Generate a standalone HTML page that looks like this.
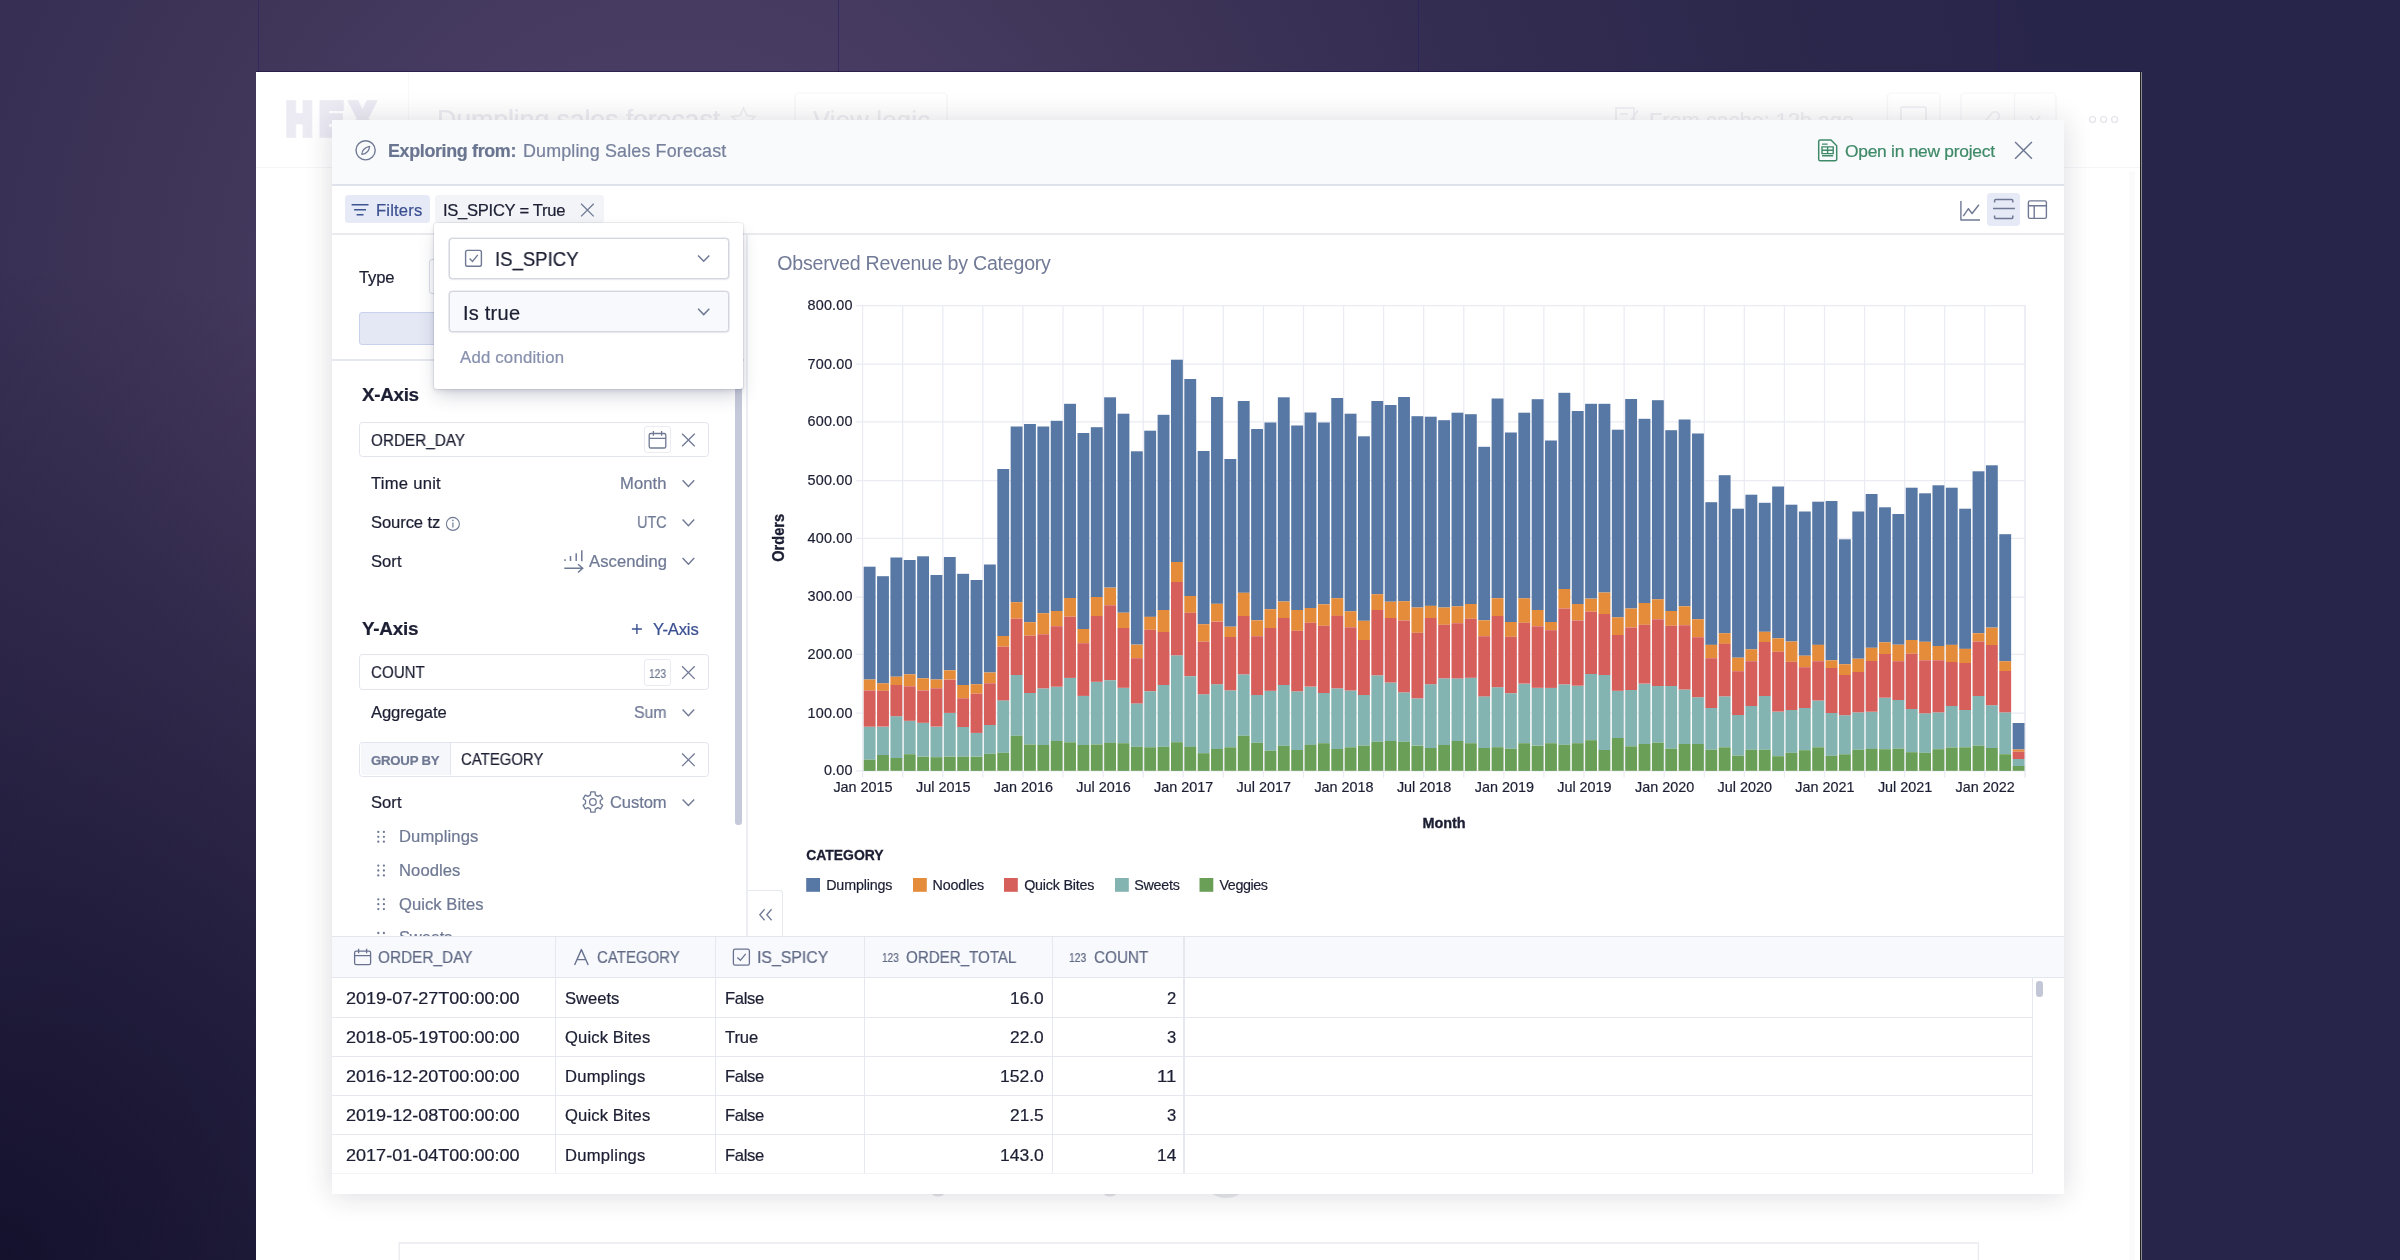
<!DOCTYPE html>
<html lang="en">
<head>
<meta charset="utf-8">
<title>Exploring from: Dumpling Sales Forecast</title>
<style>
*{box-sizing:border-box;margin:0;padding:0}
html,body{width:2400px;height:1260px;overflow:hidden}
body{position:relative;font-family:"Liberation Sans",Arial,sans-serif;color:#1c1f33;background:#28254a}
.a{position:absolute}
.bg{left:0;top:0;width:2400px;height:1260px;
 background:
  radial-gradient(circle 1000px at 0px 1260px, rgba(9,6,30,.66) 0%, rgba(9,6,30,.36) 40%, rgba(9,6,30,0) 100%),
  radial-gradient(circle 1450px at 680px 310px, #4c4066 0%, #483c62 18%, #3f3559 35%, #342d52 56%, #2c284c 76%, #28254a 100%)}
.vl{top:0;width:1px;height:1260px;background:rgba(36,28,100,.5)}
.app{left:256px;top:72px;width:1884px;height:1188px;background:#fff}
.appedge{left:2140px;top:72px;width:1px;height:1188px;background:#222224}
.appedge2{left:2141px;top:72px;width:1px;height:1188px;background:#8b8b8d}
.apptop{left:256px;top:71px;width:1885px;height:1px;background:rgba(20,14,60,.55)}
.t{position:absolute;white-space:pre;line-height:1;will-change:transform;-webkit-text-stroke:.22px currentColor}
svg{position:absolute;overflow:visible;will-change:transform}
.ov{left:0;top:0}
.gh{color:#ececf1}
.modal{left:332px;top:120px;width:1732px;height:1074px;background:#fff;
 box-shadow:0 1px 27px rgba(30,30,55,.165)}
.mh{left:332px;top:120px;width:1732px;height:64px;background:#f9fafc}
.mhb{left:332px;top:184px;width:1732px;height:2px;background:#dfe2eb}
.fb{left:332px;top:233px;width:1732px;height:2px;background:linear-gradient(#ecedf2,#e6e8ee)}
.btnf{left:344.8px;top:195px;width:85.2px;height:28.2px;background:#e6eaf6;border-radius:3.5px}
.chip{left:434.8px;top:195px;width:169.2px;height:28.2px;background:#f3f4f8;border-radius:3.5px}
.sel{left:1987px;top:192.8px;width:33.4px;height:33.4px;background:#e6eaf6;border-radius:3.5px}
.box{border:1.2px solid #e3e5ee;border-radius:3.5px;background:#fff}
.ibox{border:1.2px solid #eaecf2;border-radius:3px;background:#fff}
.pop{left:434.3px;top:223.3px;width:309px;height:165.3px;background:#fff;border-radius:3px;
 box-shadow:0 0 0 1px rgba(40,46,90,.07),0 2px 5px rgba(30,34,70,.12),0 9px 18px -3px rgba(30,34,70,.20)}
.psel{left:448.8px;width:280px;height:40.8px;border:1px solid #d4d6df;border-radius:3.5px;box-shadow:0 0 0 .6px #dddfe6,0 1px 2px rgba(40,44,80,.07)}
.th{left:332px;top:936.4px;width:1732px;height:41.2px;background:#f8f9fc;border-top:1.3px solid #e4e6ee;border-bottom:1.3px solid #e4e6ee}
.hl{left:332px;width:1700.5px;height:1px;background:#e7e8ef}
.vc{top:937px;width:1.3px;height:236px;background:#e6e8ef}
</style>
</head>
<body>
<div class="a bg"></div>
<div class="a vl" style="left:258px"></div>
<div class="a vl" style="left:838px"></div>
<div class="a vl" style="left:1418px"></div>
<div class="a vl" style="left:1998px"></div>

<div class="a app"></div>
<div class="a appedge"></div>
<div class="a appedge2"></div>
<div class="a apptop"></div>
<div class="a" style="left:256px;top:167px;width:1884px;height:1px;background:#f5f5f8"></div>
<div class="a" style="left:408px;top:72px;width:1px;height:95px;background:#f8f8fa"></div>
<div class="t" style="left:286.2px;top:96.4px;font-size:46px;font-weight:bold;letter-spacing:8.2px;color:#eceaf3;-webkit-text-stroke:5.5px #eceaf3;transform:scaleX(.8);transform-origin:0 0">HEX</div>
<div class="t gh" style="left:436.5px;top:107.4px;font-size:26.8px;letter-spacing:-0.13px">Dumpling sales forecast</div>
<svg class="ov" width="2400" height="1260" viewBox="0 0 2400 1260">
<path d="M743.5 108 L747 115.5 L755 116.5 L749 122 L750.5 130 L743.5 126 L736.5 130 L738 122 L732 116.5 L740 115.5 Z" fill="none" stroke="#efeff3" stroke-width="1.6"/>
<rect x="795" y="93" width="152" height="52" rx="4" fill="none" stroke="#f5f5f8" stroke-width="1.2"/>
<rect x="1887.5" y="93" width="52.5" height="52" rx="4" fill="none" stroke="#f6f6f8" stroke-width="1.2"/>
<rect x="1961" y="93" width="95" height="52" rx="4" fill="none" stroke="#f6f6f8" stroke-width="1.2"/>
<path d="M2014.5 93 V145" stroke="#f6f6f8" stroke-width="1.2"/>
<rect x="1901" y="107" width="25" height="22" rx="2" fill="none" stroke="#efeff3" stroke-width="1.6"/>
<path d="M1616 108 H1634 V126 H1616 Z M1620 114 H1628 M1630 122 L1638 110" fill="none" stroke="#efeff3" stroke-width="1.6"/>
<path d="M1982 125 L1992 113 A4 4 0 0 1 1998 119 L1990 128" fill="none" stroke="#f0f0f4" stroke-width="1.6"/>
<path d="M2030 116 L2035 122 L2040 116" fill="none" stroke="#f0f0f4" stroke-width="1.4"/>
<circle cx="2092.5" cy="119.5" r="3" fill="none" stroke="#e2e2e9" stroke-width="1.2"/>
<circle cx="2103.6" cy="119.5" r="3" fill="none" stroke="#e2e2e9" stroke-width="1.2"/>
<circle cx="2114.6" cy="119.5" r="3" fill="none" stroke="#e2e2e9" stroke-width="1.2"/>
<rect x="2129" y="171" width="6" height="1100" rx="3" fill="#fbfbfc"/>
<path d="M399.2 1262 V1243 H1978.4 V1262" fill="none" stroke="#e9e9ef" stroke-width="1.3"/>
<ellipse cx="938" cy="1192" rx="7" ry="4.5" fill="#e3e3e9"/>
<ellipse cx="1110" cy="1192" rx="7" ry="4.5" fill="#e3e3e9"/>
<ellipse cx="1226" cy="1190" rx="15" ry="8" fill="#e9e9ee"/>
</svg>
<div class="t gh" style="left:812.5px;top:107.5px;font-size:25.6px;letter-spacing:0.25px;color:#eeeef2">View logic</div>
<div class="t gh" style="left:1648.5px;top:110px;font-size:22px;letter-spacing:-0.15px;color:#efeff3">From cache: 12h ago</div>


<div class="a modal"></div>
<div class="a mh"></div>
<div class="a mhb"></div>
<div class="a fb"></div>
<div class="a btnf"></div>
<div class="a chip"></div>
<div class="a sel"></div>

<!-- left panel -->
<div class="a" style="left:429.2px;top:259px;width:200px;height:35px;border:1.2px solid #d9dce6;border-radius:3px;background:#fff"></div>
<div class="a" style="left:359.2px;top:312.4px;width:250px;height:32.6px;border:1.2px solid #c9d1ec;border-radius:3px;background:#e4e8f5"></div>
<div class="a" style="left:332px;top:359.4px;width:412px;height:1.4px;background:#e6e8f0"></div>
<div class="a box" style="left:359.3px;top:421.9px;width:349.6px;height:35.3px"></div>
<div class="a ibox" style="left:643.8px;top:426px;width:27px;height:27.2px"></div>
<div class="a box" style="left:359.3px;top:654.4px;width:349.6px;height:35.3px"></div>
<div class="a ibox" style="left:643.8px;top:658.6px;width:27px;height:27.2px"></div>
<div class="a box" style="left:359.3px;top:741.6px;width:349.6px;height:35px"></div>
<div class="a" style="left:360.5px;top:742.8px;width:90px;height:32.6px;background:#f6f7fa;border-right:1.2px solid #e3e5ee;border-radius:2.5px 0 0 2.5px"></div>
<div class="a" style="left:735.4px;top:380px;width:6.2px;height:445px;background:#c6c9d9;border-radius:3px"></div>
<div class="a" style="left:746.2px;top:235px;width:2.2px;height:702px;background:#eceef4"></div>
<div class="a" style="left:748.4px;top:890px;width:35px;height:47px;border:1.2px solid #e6e8ef;border-left:none;border-bottom:none;border-radius:0 3px 0 0;background:#fff"></div>

<svg class="ov" width="2400" height="1260" viewBox="0 0 2400 1260">
<circle cx="365.6" cy="150.3" r="9.6" stroke="#6f7994" stroke-width="1.4" fill="none"/>
<path d="M361.8 154.3 Q362.2 148.2 369.6 146.4 Q369 153.6 361.8 154.3 Z" stroke="#6f7994" stroke-width="1.2" fill="none" stroke-linejoin="round"/>
<path d="M1820.3 140 H1831 L1836.7 145.7 V159.2 A1.6 1.6 0 0 1 1835.1 160.8 H1820.3 A1.6 1.6 0 0 1 1818.7 159.2 V141.6 A1.6 1.6 0 0 1 1820.3 140 Z" stroke="#3f8a68" stroke-width="1.5" fill="none" stroke-linejoin="round"/>
<path d="M1822 144.1 H1827.6 M1822 146.9 H1833.2 V153.6 H1822 Z M1822 150.2 H1833.2 M1827.6 146.9 V153.6 M1822 155.8 H1833.2" stroke="#3f8a68" stroke-width="1.4" fill="none"/>
<path d="M2015.1 142.0 L2031.9 158.8 M2031.9 142.0 L2015.1 158.8" stroke="#6f7994" stroke-width="1.5" fill="none"/>
<path d="M351.6 204.8 H368.5 M354.1 209.8 H366 M356.6 214.8 H363.5" stroke="#3e5492" stroke-width="1.5" fill="none"/>
<path d="M581.1 203.8 L593.7 216.4 M593.7 203.8 L581.1 216.4" stroke="#6f7994" stroke-width="1.3" fill="none"/>
<path d="M1960.9 201.1 V220 H1980 M1963.3 216.1 L1968.4 208.7 L1972.1 213.5 L1978.9 204.8" stroke="#6f7994" stroke-width="1.4" fill="none" stroke-linejoin="round"/>
<path d="M1994.6 202.6 V200.6 A1.2 1.2 0 0 1 1995.8 199.4 H2011.6 A1.2 1.2 0 0 1 2012.8 200.6 V202.6 M1993 208.5 H2014.9 M1994.6 215.4 V217.4 A1.2 1.2 0 0 0 1995.8 218.6 H2011.6 A1.2 1.2 0 0 0 2012.8 217.4 V215.4" stroke="#6f7994" stroke-width="1.5" fill="none"/>
<rect x="2028.4" y="200.9" width="18" height="17.5" rx="1.6" stroke="#6f7994" stroke-width="1.4" fill="none"/><path d="M2028.4 205.7 H2046.4 M2034.2 205.7 V218.4" stroke="#6f7994" stroke-width="1.4" fill="none"/>
<rect x="649.2" y="433.5" width="16.6" height="14.5" rx="1.6" stroke="#6f7994" stroke-width="1.3" fill="none"/><path d="M649.2 438.4 H665.8 M653.4 431.0 V435.8 M661.6 431.0 V435.8" stroke="#6f7994" stroke-width="1.3" fill="none"/>
<path d="M682.1 433.7 L694.7 446.3 M694.7 433.7 L682.1 446.3" stroke="#6f7994" stroke-width="1.3" fill="none"/>
<path d="M682.6 480.2 L688.4 486.4 L694.2 480.2" stroke="#6f7994" stroke-width="1.4" fill="none"/>
<path d="M682.6 519.5 L688.4 525.7 L694.2 519.5" stroke="#6f7994" stroke-width="1.4" fill="none"/>
<path d="M682.6 558.1 L688.4 564.3 L694.2 558.1" stroke="#6f7994" stroke-width="1.4" fill="none"/>
<circle cx="452.9" cy="523.9" r="6.5" stroke="#6f7994" stroke-width="1.1" fill="none"/><path d="M452.9 522.6 V527.6" stroke="#6f7994" stroke-width="1.2"/><circle cx="452.9" cy="520.4" r="0.8" fill="#6f7994"/>
<path d="M565 559.2 V561 M570.5 556 V561 M576.2 553.3 V561 M581.8 550.3 V561.2 M564.3 568.3 H582.5 M578 564.2 L582.7 568.3 L578 572.5" stroke="#6f7994" stroke-width="1.5" fill="none"/>
<path d="M631.9 629 H641.9 M636.9 624 V634" stroke="#3b5091" stroke-width="1.4"/>
<path d="M682.1 666.3 L694.7 678.9 M694.7 666.3 L682.1 678.9" stroke="#6f7994" stroke-width="1.3" fill="none"/>
<path d="M682.6 709.5 L688.4 715.7 L694.2 709.5" stroke="#6f7994" stroke-width="1.4" fill="none"/>
<path d="M682.1 753.5 L694.7 766.1 M694.7 753.5 L682.1 766.1" stroke="#6f7994" stroke-width="1.3" fill="none"/>
<path d="M595.34 794.91 L595.04 791.93 L590.76 791.93 L590.46 794.91 L587.98 796.34 L585.25 795.11 L583.10 798.82 L585.54 800.57 L585.54 803.43 L583.10 805.18 L585.25 808.89 L587.98 807.66 L590.46 809.09 L590.76 812.07 L595.04 812.07 L595.34 809.09 L597.82 807.66 L600.55 808.89 L602.70 805.18 L600.26 803.43 L600.26 800.57 L602.70 798.82 L600.55 795.11 L597.82 796.34 Z" stroke="#6f7994" stroke-width="1.3" fill="none" stroke-linejoin="round"/><circle cx="592.9" cy="802" r="3.3" stroke="#6f7994" stroke-width="1.3" fill="none"/>
<path d="M682.6 799.4 L688.4 805.6 L694.2 799.4" stroke="#6f7994" stroke-width="1.4" fill="none"/>
<circle cx="378.3" cy="831.9" r="1.15" fill="#6f7994"/><circle cx="378.3" cy="836.8" r="1.15" fill="#6f7994"/><circle cx="378.3" cy="841.7" r="1.15" fill="#6f7994"/><circle cx="383.9" cy="831.9" r="1.15" fill="#6f7994"/><circle cx="383.9" cy="836.8" r="1.15" fill="#6f7994"/><circle cx="383.9" cy="841.7" r="1.15" fill="#6f7994"/>
<circle cx="378.3" cy="865.6" r="1.15" fill="#6f7994"/><circle cx="378.3" cy="870.5" r="1.15" fill="#6f7994"/><circle cx="378.3" cy="875.4" r="1.15" fill="#6f7994"/><circle cx="383.9" cy="865.6" r="1.15" fill="#6f7994"/><circle cx="383.9" cy="870.5" r="1.15" fill="#6f7994"/><circle cx="383.9" cy="875.4" r="1.15" fill="#6f7994"/>
<circle cx="378.3" cy="899.3" r="1.15" fill="#6f7994"/><circle cx="378.3" cy="904.2" r="1.15" fill="#6f7994"/><circle cx="378.3" cy="909.1" r="1.15" fill="#6f7994"/><circle cx="383.9" cy="899.3" r="1.15" fill="#6f7994"/><circle cx="383.9" cy="904.2" r="1.15" fill="#6f7994"/><circle cx="383.9" cy="909.1" r="1.15" fill="#6f7994"/>
<circle cx="378.3" cy="933.0" r="1.15" fill="#6f7994"/><circle cx="378.3" cy="937.9" r="1.15" fill="#6f7994"/><circle cx="378.3" cy="942.8" r="1.15" fill="#6f7994"/><circle cx="383.9" cy="933.0" r="1.15" fill="#6f7994"/><circle cx="383.9" cy="937.9" r="1.15" fill="#6f7994"/><circle cx="383.9" cy="942.8" r="1.15" fill="#6f7994"/>
<path d="M764.6 909.3 L759.8 914.8 L764.6 920.3 M771.6 909.3 L766.8 914.8 L771.6 920.3" stroke="#6f7994" stroke-width="1.3" fill="none"/>
</svg>
<div class="t" style="left:388.3px;top:142.7px;font-size:17.9px;color:#6a7590;letter-spacing:-0.342px;font-weight:bold">Exploring from:</div>
<div class="t" style="left:522.5px;top:142.7px;font-size:17.9px;color:#77819d;letter-spacing:0.156px">Dumpling Sales Forecast</div>
<div class="t" style="left:1845.0px;top:143.2px;font-size:17.4px;color:#3f8a68;letter-spacing:-0.260px">Open in new project</div>
<div class="t" style="left:376.2px;top:202.6px;font-size:16.6px;color:#3b5091;letter-spacing:0.180px">Filters</div>
<div class="t" style="left:443.2px;top:202.6px;font-size:16.6px;color:#1c1f33;letter-spacing:-0.288px">IS_SPICY = True</div>
<div class="t" style="left:359.2px;top:269.6px;font-size:16.6px;color:#1c1f33;letter-spacing:-0.195px">Type</div>
<div class="t" style="left:361.7px;top:385.9px;font-size:18.9px;color:#1c1f33;letter-spacing:-0.339px;font-weight:bold">X-Axis</div>
<div class="t" style="left:370.5px;top:432.5px;font-size:16.6px;color:#1c1f33;transform:scaleX(0.9211);transform-origin:0 0">ORDER_DAY</div>
<div class="t" style="left:370.5px;top:476.1px;font-size:16.6px;color:#1c1f33;letter-spacing:0.259px">Time unit</div>
<div class="t" style="left:620.0px;top:476.1px;font-size:16.6px;color:#6f7994;letter-spacing:0.069px">Month</div>
<div class="t" style="left:370.5px;top:515.4px;font-size:16.6px;color:#1c1f33;letter-spacing:-0.101px">Source tz</div>
<div class="t" style="left:636.7px;top:515.4px;font-size:16.6px;color:#6f7994;transform:scaleX(0.8707);transform-origin:0 0">UTC</div>
<div class="t" style="left:370.5px;top:554.4px;font-size:16.6px;color:#1c1f33;letter-spacing:0.021px">Sort</div>
<div class="t" style="left:589.0px;top:554.4px;font-size:16.6px;color:#6f7994;letter-spacing:0.075px">Ascending</div>
<div class="t" style="left:361.7px;top:620.4px;font-size:18.9px;color:#1c1f33;letter-spacing:-0.273px;font-weight:bold">Y-Axis</div>
<div class="t" style="left:652.9px;top:622.3px;font-size:16.6px;color:#3b5091;letter-spacing:-0.144px">Y-Axis</div>
<div class="t" style="left:370.5px;top:664.9px;font-size:16.6px;color:#1c1f33;transform:scaleX(0.9119);transform-origin:0 0">COUNT</div>
<div class="t" style="left:648.9px;top:667.6px;font-size:12.3px;color:#6f7994;transform:scaleX(0.8280);transform-origin:0 0">123</div>
<div class="t" style="left:370.5px;top:705.4px;font-size:16.6px;color:#1c1f33;letter-spacing:-0.110px">Aggregate</div>
<div class="t" style="left:633.8px;top:705.4px;font-size:16.6px;color:#6f7994;transform:scaleX(0.9553);transform-origin:0 0">Sum</div>
<div class="t" style="left:370.5px;top:753.5px;font-size:13.2px;color:#6f7994;letter-spacing:-0.230px;font-weight:bold">GROUP BY</div>
<div class="t" style="left:461.4px;top:751.8px;font-size:16.6px;color:#1c1f33;transform:scaleX(0.8996);transform-origin:0 0">CATEGORY</div>
<div class="t" style="left:370.5px;top:795.4px;font-size:16.6px;color:#1c1f33;letter-spacing:0.021px">Sort</div>
<div class="t" style="left:609.8px;top:795.4px;font-size:16.6px;color:#6f7994;letter-spacing:-0.114px">Custom</div>
<div class="t" style="left:398.6px;top:829.2px;font-size:16.6px;color:#6f7994;letter-spacing:0.112px">Dumplings</div>
<div class="t" style="left:398.6px;top:863.0px;font-size:16.6px;color:#6f7994;letter-spacing:0.085px">Noodles</div>
<div class="t" style="left:398.6px;top:896.6px;font-size:16.6px;color:#6f7994;letter-spacing:0.058px">Quick Bites</div>
<div class="t" style="left:398.6px;top:930.3px;font-size:16.6px;color:#6f7994;letter-spacing:-0.204px">Sweets</div>

<svg class="chart" style="left:750px;top:234px" width="1314" height="702" viewBox="750 234 1314 702" font-family="'Liberation Sans', Arial, sans-serif">
<g stroke="#eaebf3" stroke-width="1.25" fill="none"><line x1="856" x2="2025.5" y1="770.8" y2="770.8"/><line x1="856" x2="2025.5" y1="713.2" y2="713.2"/><line x1="856" x2="2025.5" y1="654.3" y2="654.3"/><line x1="856" x2="2025.5" y1="597.0" y2="597.0"/><line x1="856" x2="2025.5" y1="538.3" y2="538.3"/><line x1="856" x2="2025.5" y1="480.5" y2="480.5"/><line x1="856" x2="2025.5" y1="421.8" y2="421.8"/><line x1="856" x2="2025.5" y1="364.2" y2="364.2"/><line x1="856" x2="2025.5" y1="305.5" y2="305.5"/><line x1="862.6" x2="862.6" y1="305.5" y2="777.5"/><line x1="902.7" x2="902.7" y1="305.5" y2="777.5"/><line x1="942.8" x2="942.8" y1="305.5" y2="777.5"/><line x1="982.8" x2="982.8" y1="305.5" y2="777.5"/><line x1="1022.9" x2="1022.9" y1="305.5" y2="777.5"/><line x1="1063.0" x2="1063.0" y1="305.5" y2="777.5"/><line x1="1103.1" x2="1103.1" y1="305.5" y2="777.5"/><line x1="1143.2" x2="1143.2" y1="305.5" y2="777.5"/><line x1="1183.2" x2="1183.2" y1="305.5" y2="777.5"/><line x1="1223.3" x2="1223.3" y1="305.5" y2="777.5"/><line x1="1263.4" x2="1263.4" y1="305.5" y2="777.5"/><line x1="1303.5" x2="1303.5" y1="305.5" y2="777.5"/><line x1="1343.6" x2="1343.6" y1="305.5" y2="777.5"/><line x1="1383.6" x2="1383.6" y1="305.5" y2="777.5"/><line x1="1423.7" x2="1423.7" y1="305.5" y2="777.5"/><line x1="1463.8" x2="1463.8" y1="305.5" y2="777.5"/><line x1="1503.9" x2="1503.9" y1="305.5" y2="777.5"/><line x1="1543.9" x2="1543.9" y1="305.5" y2="777.5"/><line x1="1584.0" x2="1584.0" y1="305.5" y2="777.5"/><line x1="1624.1" x2="1624.1" y1="305.5" y2="777.5"/><line x1="1664.2" x2="1664.2" y1="305.5" y2="777.5"/><line x1="1704.3" x2="1704.3" y1="305.5" y2="777.5"/><line x1="1744.3" x2="1744.3" y1="305.5" y2="777.5"/><line x1="1784.4" x2="1784.4" y1="305.5" y2="777.5"/><line x1="1824.5" x2="1824.5" y1="305.5" y2="777.5"/><line x1="1864.6" x2="1864.6" y1="305.5" y2="777.5"/><line x1="1904.7" x2="1904.7" y1="305.5" y2="777.5"/><line x1="1944.7" x2="1944.7" y1="305.5" y2="777.5"/><line x1="1984.8" x2="1984.8" y1="305.5" y2="777.5"/><line x1="2024.9" x2="2024.9" y1="305.5" y2="777.5"/><line x1="2025.3" x2="2025.3" y1="305.5" y2="777.5"/></g>
<g fill="#5778a4"><rect x="863.70" y="566.7" width="11.86" height="112.8"/><rect x="877.06" y="576.2" width="11.86" height="107.2"/><rect x="890.42" y="557.5" width="11.86" height="119.2"/><rect x="903.78" y="560.0" width="11.86" height="114.3"/><rect x="917.14" y="556.3" width="11.86" height="122.0"/><rect x="930.50" y="575.0" width="11.86" height="104.5"/><rect x="943.86" y="557.0" width="11.86" height="113.3"/><rect x="957.22" y="573.8" width="11.86" height="111.2"/><rect x="970.58" y="580.0" width="11.86" height="104.2"/><rect x="983.94" y="564.5" width="11.86" height="108.0"/><rect x="997.30" y="469.0" width="11.86" height="167.0"/><rect x="1010.66" y="426.5" width="11.86" height="175.7"/><rect x="1024.02" y="424.0" width="11.86" height="198.2"/><rect x="1037.38" y="426.5" width="11.86" height="186.7"/><rect x="1050.74" y="420.8" width="11.86" height="190.2"/><rect x="1064.10" y="403.8" width="11.86" height="194.2"/><rect x="1077.46" y="433.0" width="11.86" height="196.0"/><rect x="1090.82" y="427.2" width="11.86" height="169.8"/><rect x="1104.18" y="397.3" width="11.86" height="190.3"/><rect x="1117.54" y="413.7" width="11.86" height="199.0"/><rect x="1130.90" y="451.3" width="11.86" height="193.3"/><rect x="1144.26" y="430.7" width="11.86" height="186.2"/><rect x="1157.61" y="414.8" width="11.86" height="195.2"/><rect x="1170.97" y="359.7" width="11.86" height="202.3"/><rect x="1184.33" y="379.0" width="11.86" height="217.0"/><rect x="1197.69" y="451.0" width="11.86" height="173.2"/><rect x="1211.05" y="397.0" width="11.86" height="206.8"/><rect x="1224.41" y="459.0" width="11.86" height="167.7"/><rect x="1237.77" y="401.0" width="11.86" height="191.8"/><rect x="1251.13" y="429.0" width="11.86" height="191.3"/><rect x="1264.49" y="422.5" width="11.86" height="186.7"/><rect x="1277.85" y="397.3" width="11.86" height="204.2"/><rect x="1291.21" y="425.5" width="11.86" height="184.5"/><rect x="1304.57" y="412.5" width="11.86" height="195.5"/><rect x="1317.93" y="422.5" width="11.86" height="181.8"/><rect x="1331.29" y="398.0" width="11.86" height="200.2"/><rect x="1344.65" y="413.7" width="11.86" height="197.7"/><rect x="1358.01" y="436.3" width="11.86" height="184.5"/><rect x="1371.37" y="401.0" width="11.86" height="193.2"/><rect x="1384.73" y="405.0" width="11.86" height="196.7"/><rect x="1398.09" y="397.0" width="11.86" height="204.2"/><rect x="1411.45" y="416.2" width="11.86" height="191.3"/><rect x="1424.81" y="416.7" width="11.86" height="189.2"/><rect x="1438.17" y="420.2" width="11.86" height="187.3"/><rect x="1451.53" y="412.7" width="11.86" height="193.7"/><rect x="1464.89" y="414.2" width="11.86" height="189.8"/><rect x="1478.25" y="446.8" width="11.86" height="173.5"/><rect x="1491.61" y="398.5" width="11.86" height="199.7"/><rect x="1504.97" y="432.5" width="11.86" height="189.5"/><rect x="1518.33" y="412.7" width="11.86" height="185.7"/><rect x="1531.69" y="399.2" width="11.86" height="210.8"/><rect x="1545.05" y="440.5" width="11.86" height="181.5"/><rect x="1558.41" y="392.8" width="11.86" height="196.2"/><rect x="1571.77" y="411.0" width="11.86" height="193.0"/><rect x="1585.13" y="403.8" width="11.86" height="194.8"/><rect x="1598.49" y="403.8" width="11.86" height="188.7"/><rect x="1611.85" y="429.7" width="11.86" height="187.7"/><rect x="1625.21" y="399.0" width="11.86" height="209.5"/><rect x="1638.57" y="418.8" width="11.86" height="184.2"/><rect x="1651.93" y="400.2" width="11.86" height="199.2"/><rect x="1665.29" y="430.2" width="11.86" height="180.8"/><rect x="1678.65" y="419.5" width="11.86" height="186.8"/><rect x="1692.01" y="433.5" width="11.86" height="185.7"/><rect x="1705.37" y="502.2" width="11.86" height="142.7"/><rect x="1718.73" y="475.2" width="11.86" height="158.0"/><rect x="1732.09" y="508.7" width="11.86" height="149.0"/><rect x="1745.44" y="494.7" width="11.86" height="154.7"/><rect x="1758.80" y="502.8" width="11.86" height="129.0"/><rect x="1772.16" y="486.5" width="11.86" height="151.8"/><rect x="1785.52" y="504.7" width="11.86" height="136.8"/><rect x="1798.88" y="511.5" width="11.86" height="144.2"/><rect x="1812.24" y="501.7" width="11.86" height="143.2"/><rect x="1825.60" y="501.0" width="11.86" height="159.3"/><rect x="1838.96" y="539.3" width="11.86" height="124.8"/><rect x="1852.32" y="511.5" width="11.86" height="147.2"/><rect x="1865.68" y="494.0" width="11.86" height="153.8"/><rect x="1879.04" y="507.3" width="11.86" height="135.0"/><rect x="1892.40" y="514.0" width="11.86" height="130.7"/><rect x="1905.76" y="487.7" width="11.86" height="152.3"/><rect x="1919.12" y="493.3" width="11.86" height="148.5"/><rect x="1932.48" y="485.3" width="11.86" height="160.7"/><rect x="1945.84" y="487.7" width="11.86" height="157.2"/><rect x="1959.20" y="508.7" width="11.86" height="140.2"/><rect x="1972.56" y="471.3" width="11.86" height="161.8"/><rect x="1985.92" y="465.3" width="11.86" height="162.3"/><rect x="1999.28" y="534.2" width="11.86" height="127.0"/><rect x="2012.64" y="723.0" width="11.86" height="26.5"/></g>
<g fill="#e58c3b"><rect x="863.70" y="679.5" width="11.86" height="11.0"/><rect x="877.06" y="683.3" width="11.86" height="7.5"/><rect x="890.42" y="676.7" width="11.86" height="8.3"/><rect x="903.78" y="674.3" width="11.86" height="12.0"/><rect x="917.14" y="678.3" width="11.86" height="12.2"/><rect x="930.50" y="679.5" width="11.86" height="8.8"/><rect x="943.86" y="670.3" width="11.86" height="9.3"/><rect x="957.22" y="685.0" width="11.86" height="13.3"/><rect x="970.58" y="684.2" width="11.86" height="9.5"/><rect x="983.94" y="672.5" width="11.86" height="10.8"/><rect x="997.30" y="636.0" width="11.86" height="10.7"/><rect x="1010.66" y="602.2" width="11.86" height="16.5"/><rect x="1024.02" y="622.2" width="11.86" height="13.5"/><rect x="1037.38" y="613.2" width="11.86" height="21.2"/><rect x="1050.74" y="611.0" width="11.86" height="15.2"/><rect x="1064.10" y="598.0" width="11.86" height="18.7"/><rect x="1077.46" y="629.0" width="11.86" height="14.2"/><rect x="1090.82" y="597.0" width="11.86" height="19.0"/><rect x="1104.18" y="587.7" width="11.86" height="17.7"/><rect x="1117.54" y="612.7" width="11.86" height="15.3"/><rect x="1130.90" y="644.7" width="11.86" height="13.5"/><rect x="1144.26" y="616.8" width="11.86" height="13.0"/><rect x="1157.61" y="610.0" width="11.86" height="22.0"/><rect x="1170.97" y="562.0" width="11.86" height="20.0"/><rect x="1184.33" y="596.0" width="11.86" height="16.8"/><rect x="1197.69" y="624.2" width="11.86" height="17.5"/><rect x="1211.05" y="603.8" width="11.86" height="17.8"/><rect x="1224.41" y="626.7" width="11.86" height="10.3"/><rect x="1237.77" y="592.8" width="11.86" height="23.2"/><rect x="1251.13" y="620.3" width="11.86" height="15.8"/><rect x="1264.49" y="609.2" width="11.86" height="18.8"/><rect x="1277.85" y="601.5" width="11.86" height="16.5"/><rect x="1291.21" y="610.0" width="11.86" height="20.8"/><rect x="1304.57" y="608.0" width="11.86" height="14.8"/><rect x="1317.93" y="604.3" width="11.86" height="21.5"/><rect x="1331.29" y="598.2" width="11.86" height="17.7"/><rect x="1344.65" y="611.3" width="11.86" height="16.0"/><rect x="1358.01" y="620.8" width="11.86" height="19.2"/><rect x="1371.37" y="594.2" width="11.86" height="15.8"/><rect x="1384.73" y="601.7" width="11.86" height="16.3"/><rect x="1398.09" y="601.2" width="11.86" height="19.3"/><rect x="1411.45" y="607.5" width="11.86" height="25.3"/><rect x="1424.81" y="605.8" width="11.86" height="12.2"/><rect x="1438.17" y="607.5" width="11.86" height="17.3"/><rect x="1451.53" y="606.3" width="11.86" height="16.8"/><rect x="1464.89" y="604.0" width="11.86" height="14.8"/><rect x="1478.25" y="620.3" width="11.86" height="15.8"/><rect x="1491.61" y="598.2" width="11.86" height="17.8"/><rect x="1504.97" y="622.0" width="11.86" height="14.8"/><rect x="1518.33" y="598.3" width="11.86" height="24.5"/><rect x="1531.69" y="610.0" width="11.86" height="16.3"/><rect x="1545.05" y="622.0" width="11.86" height="8.2"/><rect x="1558.41" y="589.0" width="11.86" height="19.5"/><rect x="1571.77" y="604.0" width="11.86" height="16.5"/><rect x="1585.13" y="598.7" width="11.86" height="13.0"/><rect x="1598.49" y="592.5" width="11.86" height="21.5"/><rect x="1611.85" y="617.3" width="11.86" height="17.7"/><rect x="1625.21" y="608.5" width="11.86" height="19.0"/><rect x="1638.57" y="603.0" width="11.86" height="21.8"/><rect x="1651.93" y="599.3" width="11.86" height="20.0"/><rect x="1665.29" y="611.0" width="11.86" height="14.8"/><rect x="1678.65" y="606.3" width="11.86" height="18.8"/><rect x="1692.01" y="619.2" width="11.86" height="18.0"/><rect x="1705.37" y="644.8" width="11.86" height="13.3"/><rect x="1718.73" y="633.2" width="11.86" height="10.7"/><rect x="1732.09" y="657.7" width="11.86" height="13.5"/><rect x="1745.44" y="649.3" width="11.86" height="11.8"/><rect x="1758.80" y="631.8" width="11.86" height="10.2"/><rect x="1772.16" y="638.3" width="11.86" height="13.5"/><rect x="1785.52" y="641.5" width="11.86" height="20.3"/><rect x="1798.88" y="655.7" width="11.86" height="11.5"/><rect x="1812.24" y="644.8" width="11.86" height="16.3"/><rect x="1825.60" y="660.3" width="11.86" height="7.7"/><rect x="1838.96" y="664.2" width="11.86" height="10.8"/><rect x="1852.32" y="658.7" width="11.86" height="13.3"/><rect x="1865.68" y="647.8" width="11.86" height="13.2"/><rect x="1879.04" y="642.3" width="11.86" height="11.7"/><rect x="1892.40" y="644.7" width="11.86" height="16.5"/><rect x="1905.76" y="640.0" width="11.86" height="13.8"/><rect x="1919.12" y="641.8" width="11.86" height="18.5"/><rect x="1932.48" y="646.0" width="11.86" height="14.3"/><rect x="1945.84" y="644.8" width="11.86" height="17.2"/><rect x="1959.20" y="648.8" width="11.86" height="14.2"/><rect x="1972.56" y="633.2" width="11.86" height="8.3"/><rect x="1985.92" y="627.7" width="11.86" height="17.3"/><rect x="1999.28" y="661.2" width="11.86" height="9.8"/><rect x="2012.64" y="749.5" width="11.86" height="2.2"/></g>
<g fill="#84b4b1"><rect x="863.70" y="726.7" width="11.86" height="33.0"/><rect x="877.06" y="726.7" width="11.86" height="28.3"/><rect x="890.42" y="716.2" width="11.86" height="41.8"/><rect x="903.78" y="720.8" width="11.86" height="33.3"/><rect x="917.14" y="722.8" width="11.86" height="33.8"/><rect x="930.50" y="726.7" width="11.86" height="30.5"/><rect x="943.86" y="712.8" width="11.86" height="43.8"/><rect x="957.22" y="727.0" width="11.86" height="29.7"/><rect x="970.58" y="732.8" width="11.86" height="23.8"/><rect x="983.94" y="725.0" width="11.86" height="28.8"/><rect x="997.30" y="700.3" width="11.86" height="52.5"/><rect x="1010.66" y="675.0" width="11.86" height="60.8"/><rect x="1024.02" y="693.0" width="11.86" height="51.5"/><rect x="1037.38" y="688.3" width="11.86" height="56.7"/><rect x="1050.74" y="686.7" width="11.86" height="54.3"/><rect x="1064.10" y="677.8" width="11.86" height="64.5"/><rect x="1077.46" y="695.8" width="11.86" height="49.2"/><rect x="1090.82" y="681.8" width="11.86" height="62.7"/><rect x="1104.18" y="680.2" width="11.86" height="62.7"/><rect x="1117.54" y="687.8" width="11.86" height="55.3"/><rect x="1130.90" y="703.3" width="11.86" height="43.5"/><rect x="1144.26" y="691.2" width="11.86" height="56.2"/><rect x="1157.61" y="685.0" width="11.86" height="61.8"/><rect x="1170.97" y="655.3" width="11.86" height="86.8"/><rect x="1184.33" y="676.2" width="11.86" height="70.7"/><rect x="1197.69" y="694.2" width="11.86" height="59.0"/><rect x="1211.05" y="684.2" width="11.86" height="64.8"/><rect x="1224.41" y="690.3" width="11.86" height="57.0"/><rect x="1237.77" y="674.3" width="11.86" height="61.5"/><rect x="1251.13" y="695.0" width="11.86" height="47.8"/><rect x="1264.49" y="690.8" width="11.86" height="60.0"/><rect x="1277.85" y="685.0" width="11.86" height="60.8"/><rect x="1291.21" y="691.3" width="11.86" height="58.7"/><rect x="1304.57" y="686.7" width="11.86" height="58.2"/><rect x="1317.93" y="693.0" width="11.86" height="50.2"/><rect x="1331.29" y="688.3" width="11.86" height="60.7"/><rect x="1344.65" y="690.5" width="11.86" height="56.8"/><rect x="1358.01" y="695.0" width="11.86" height="50.7"/><rect x="1371.37" y="675.3" width="11.86" height="66.5"/><rect x="1384.73" y="682.5" width="11.86" height="58.5"/><rect x="1398.09" y="692.3" width="11.86" height="49.5"/><rect x="1411.45" y="698.3" width="11.86" height="47.3"/><rect x="1424.81" y="684.2" width="11.86" height="63.8"/><rect x="1438.17" y="678.3" width="11.86" height="66.7"/><rect x="1451.53" y="678.3" width="11.86" height="62.7"/><rect x="1464.89" y="677.8" width="11.86" height="65.3"/><rect x="1478.25" y="696.3" width="11.86" height="51.7"/><rect x="1491.61" y="687.2" width="11.86" height="60.0"/><rect x="1504.97" y="693.2" width="11.86" height="55.5"/><rect x="1518.33" y="683.7" width="11.86" height="59.5"/><rect x="1531.69" y="687.8" width="11.86" height="57.8"/><rect x="1545.05" y="687.8" width="11.86" height="55.3"/><rect x="1558.41" y="684.3" width="11.86" height="60.5"/><rect x="1571.77" y="685.7" width="11.86" height="57.5"/><rect x="1585.13" y="674.0" width="11.86" height="66.2"/><rect x="1598.49" y="675.0" width="11.86" height="75.0"/><rect x="1611.85" y="690.8" width="11.86" height="47.2"/><rect x="1625.21" y="690.0" width="11.86" height="56.3"/><rect x="1638.57" y="683.7" width="11.86" height="60.3"/><rect x="1651.93" y="686.0" width="11.86" height="56.7"/><rect x="1665.29" y="686.0" width="11.86" height="62.7"/><rect x="1678.65" y="689.5" width="11.86" height="54.5"/><rect x="1692.01" y="697.2" width="11.86" height="46.8"/><rect x="1705.37" y="708.0" width="11.86" height="41.7"/><rect x="1718.73" y="696.3" width="11.86" height="51.0"/><rect x="1732.09" y="715.0" width="11.86" height="40.7"/><rect x="1745.44" y="706.0" width="11.86" height="43.8"/><rect x="1758.80" y="696.0" width="11.86" height="53.8"/><rect x="1772.16" y="711.7" width="11.86" height="44.5"/><rect x="1785.52" y="710.0" width="11.86" height="42.8"/><rect x="1798.88" y="708.0" width="11.86" height="42.2"/><rect x="1812.24" y="700.5" width="11.86" height="46.8"/><rect x="1825.60" y="713.0" width="11.86" height="42.8"/><rect x="1838.96" y="715.2" width="11.86" height="39.2"/><rect x="1852.32" y="712.3" width="11.86" height="37.5"/><rect x="1865.68" y="711.7" width="11.86" height="37.2"/><rect x="1879.04" y="697.7" width="11.86" height="51.5"/><rect x="1892.40" y="700.0" width="11.86" height="48.7"/><rect x="1905.76" y="709.0" width="11.86" height="43.2"/><rect x="1919.12" y="713.3" width="11.86" height="39.5"/><rect x="1932.48" y="712.3" width="11.86" height="36.8"/><rect x="1945.84" y="706.0" width="11.86" height="41.5"/><rect x="1959.20" y="710.0" width="11.86" height="37.3"/><rect x="1972.56" y="696.0" width="11.86" height="49.7"/><rect x="1985.92" y="705.2" width="11.86" height="42.8"/><rect x="1999.28" y="712.3" width="11.86" height="41.8"/><rect x="2012.64" y="759.0" width="11.86" height="7.0"/></g>
<g fill="#d65f5c"><rect x="863.70" y="690.5" width="11.86" height="36.2"/><rect x="877.06" y="690.8" width="11.86" height="35.8"/><rect x="890.42" y="685.0" width="11.86" height="31.2"/><rect x="903.78" y="686.3" width="11.86" height="34.5"/><rect x="917.14" y="690.5" width="11.86" height="32.3"/><rect x="930.50" y="688.3" width="11.86" height="38.3"/><rect x="943.86" y="679.7" width="11.86" height="33.2"/><rect x="957.22" y="698.3" width="11.86" height="28.7"/><rect x="970.58" y="693.7" width="11.86" height="39.2"/><rect x="983.94" y="683.3" width="11.86" height="41.7"/><rect x="997.30" y="646.7" width="11.86" height="53.7"/><rect x="1010.66" y="618.7" width="11.86" height="56.3"/><rect x="1024.02" y="635.7" width="11.86" height="57.3"/><rect x="1037.38" y="634.3" width="11.86" height="54.0"/><rect x="1050.74" y="626.2" width="11.86" height="60.5"/><rect x="1064.10" y="616.7" width="11.86" height="61.2"/><rect x="1077.46" y="643.2" width="11.86" height="52.7"/><rect x="1090.82" y="616.0" width="11.86" height="65.8"/><rect x="1104.18" y="605.3" width="11.86" height="74.8"/><rect x="1117.54" y="628.0" width="11.86" height="59.8"/><rect x="1130.90" y="658.2" width="11.86" height="45.2"/><rect x="1144.26" y="629.8" width="11.86" height="61.3"/><rect x="1157.61" y="632.0" width="11.86" height="53.0"/><rect x="1170.97" y="582.0" width="11.86" height="73.3"/><rect x="1184.33" y="612.8" width="11.86" height="63.3"/><rect x="1197.69" y="641.7" width="11.86" height="52.5"/><rect x="1211.05" y="621.7" width="11.86" height="62.5"/><rect x="1224.41" y="637.0" width="11.86" height="53.3"/><rect x="1237.77" y="616.0" width="11.86" height="58.3"/><rect x="1251.13" y="636.2" width="11.86" height="58.8"/><rect x="1264.49" y="628.0" width="11.86" height="62.8"/><rect x="1277.85" y="618.0" width="11.86" height="67.0"/><rect x="1291.21" y="630.8" width="11.86" height="60.5"/><rect x="1304.57" y="622.8" width="11.86" height="63.8"/><rect x="1317.93" y="625.8" width="11.86" height="67.2"/><rect x="1331.29" y="615.8" width="11.86" height="72.5"/><rect x="1344.65" y="627.3" width="11.86" height="63.2"/><rect x="1358.01" y="640.0" width="11.86" height="55.0"/><rect x="1371.37" y="610.0" width="11.86" height="65.3"/><rect x="1384.73" y="618.0" width="11.86" height="64.5"/><rect x="1398.09" y="620.5" width="11.86" height="71.8"/><rect x="1411.45" y="632.8" width="11.86" height="65.5"/><rect x="1424.81" y="618.0" width="11.86" height="66.2"/><rect x="1438.17" y="624.8" width="11.86" height="53.5"/><rect x="1451.53" y="623.2" width="11.86" height="55.2"/><rect x="1464.89" y="618.8" width="11.86" height="59.0"/><rect x="1478.25" y="636.2" width="11.86" height="60.2"/><rect x="1491.61" y="616.0" width="11.86" height="71.2"/><rect x="1504.97" y="636.8" width="11.86" height="56.3"/><rect x="1518.33" y="622.8" width="11.86" height="60.8"/><rect x="1531.69" y="626.3" width="11.86" height="61.5"/><rect x="1545.05" y="630.2" width="11.86" height="57.7"/><rect x="1558.41" y="608.5" width="11.86" height="75.8"/><rect x="1571.77" y="620.5" width="11.86" height="65.2"/><rect x="1585.13" y="611.7" width="11.86" height="62.3"/><rect x="1598.49" y="614.0" width="11.86" height="61.0"/><rect x="1611.85" y="635.0" width="11.86" height="55.8"/><rect x="1625.21" y="627.5" width="11.86" height="62.5"/><rect x="1638.57" y="624.8" width="11.86" height="58.8"/><rect x="1651.93" y="619.3" width="11.86" height="66.7"/><rect x="1665.29" y="625.8" width="11.86" height="60.2"/><rect x="1678.65" y="625.2" width="11.86" height="64.3"/><rect x="1692.01" y="637.2" width="11.86" height="60.0"/><rect x="1705.37" y="658.2" width="11.86" height="49.8"/><rect x="1718.73" y="643.8" width="11.86" height="52.5"/><rect x="1732.09" y="671.2" width="11.86" height="43.8"/><rect x="1745.44" y="661.2" width="11.86" height="44.8"/><rect x="1758.80" y="642.0" width="11.86" height="54.0"/><rect x="1772.16" y="651.8" width="11.86" height="59.8"/><rect x="1785.52" y="661.8" width="11.86" height="48.2"/><rect x="1798.88" y="667.2" width="11.86" height="40.8"/><rect x="1812.24" y="661.2" width="11.86" height="39.3"/><rect x="1825.60" y="668.0" width="11.86" height="45.0"/><rect x="1838.96" y="675.0" width="11.86" height="40.2"/><rect x="1852.32" y="672.0" width="11.86" height="40.3"/><rect x="1865.68" y="661.0" width="11.86" height="50.7"/><rect x="1879.04" y="654.0" width="11.86" height="43.7"/><rect x="1892.40" y="661.2" width="11.86" height="38.8"/><rect x="1905.76" y="653.8" width="11.86" height="55.2"/><rect x="1919.12" y="660.3" width="11.86" height="53.0"/><rect x="1932.48" y="660.3" width="11.86" height="52.0"/><rect x="1945.84" y="662.0" width="11.86" height="44.0"/><rect x="1959.20" y="663.0" width="11.86" height="47.0"/><rect x="1972.56" y="641.5" width="11.86" height="54.5"/><rect x="1985.92" y="645.0" width="11.86" height="60.2"/><rect x="1999.28" y="671.0" width="11.86" height="41.3"/><rect x="2012.64" y="751.7" width="11.86" height="7.3"/></g>
<g fill="#6a9f58"><rect x="863.70" y="759.7" width="11.86" height="11.2"/><rect x="877.06" y="755.0" width="11.86" height="15.8"/><rect x="890.42" y="758.0" width="11.86" height="12.8"/><rect x="903.78" y="754.2" width="11.86" height="16.7"/><rect x="917.14" y="756.7" width="11.86" height="14.2"/><rect x="930.50" y="757.2" width="11.86" height="13.7"/><rect x="943.86" y="756.7" width="11.86" height="14.2"/><rect x="957.22" y="756.7" width="11.86" height="14.2"/><rect x="970.58" y="756.7" width="11.86" height="14.2"/><rect x="983.94" y="753.8" width="11.86" height="17.0"/><rect x="997.30" y="752.8" width="11.86" height="18.0"/><rect x="1010.66" y="735.8" width="11.86" height="35.0"/><rect x="1024.02" y="744.5" width="11.86" height="26.3"/><rect x="1037.38" y="745.0" width="11.86" height="25.8"/><rect x="1050.74" y="741.0" width="11.86" height="29.8"/><rect x="1064.10" y="742.3" width="11.86" height="28.5"/><rect x="1077.46" y="745.0" width="11.86" height="25.8"/><rect x="1090.82" y="744.5" width="11.86" height="26.3"/><rect x="1104.18" y="742.8" width="11.86" height="28.0"/><rect x="1117.54" y="743.2" width="11.86" height="27.7"/><rect x="1130.90" y="746.8" width="11.86" height="24.0"/><rect x="1144.26" y="747.3" width="11.86" height="23.5"/><rect x="1157.61" y="746.8" width="11.86" height="24.0"/><rect x="1170.97" y="742.2" width="11.86" height="28.7"/><rect x="1184.33" y="746.8" width="11.86" height="24.0"/><rect x="1197.69" y="753.2" width="11.86" height="17.7"/><rect x="1211.05" y="749.0" width="11.86" height="21.8"/><rect x="1224.41" y="747.3" width="11.86" height="23.5"/><rect x="1237.77" y="735.8" width="11.86" height="35.0"/><rect x="1251.13" y="742.8" width="11.86" height="28.0"/><rect x="1264.49" y="750.8" width="11.86" height="20.0"/><rect x="1277.85" y="745.8" width="11.86" height="25.0"/><rect x="1291.21" y="750.0" width="11.86" height="20.8"/><rect x="1304.57" y="744.8" width="11.86" height="26.0"/><rect x="1317.93" y="743.2" width="11.86" height="27.7"/><rect x="1331.29" y="749.0" width="11.86" height="21.8"/><rect x="1344.65" y="747.3" width="11.86" height="23.5"/><rect x="1358.01" y="745.7" width="11.86" height="25.2"/><rect x="1371.37" y="741.8" width="11.86" height="29.0"/><rect x="1384.73" y="741.0" width="11.86" height="29.8"/><rect x="1398.09" y="741.8" width="11.86" height="29.0"/><rect x="1411.45" y="745.7" width="11.86" height="25.2"/><rect x="1424.81" y="748.0" width="11.86" height="22.8"/><rect x="1438.17" y="745.0" width="11.86" height="25.8"/><rect x="1451.53" y="741.0" width="11.86" height="29.8"/><rect x="1464.89" y="743.2" width="11.86" height="27.7"/><rect x="1478.25" y="748.0" width="11.86" height="22.8"/><rect x="1491.61" y="747.2" width="11.86" height="23.7"/><rect x="1504.97" y="748.7" width="11.86" height="22.2"/><rect x="1518.33" y="743.2" width="11.86" height="27.7"/><rect x="1531.69" y="745.7" width="11.86" height="25.2"/><rect x="1545.05" y="743.2" width="11.86" height="27.7"/><rect x="1558.41" y="744.8" width="11.86" height="26.0"/><rect x="1571.77" y="743.2" width="11.86" height="27.7"/><rect x="1585.13" y="740.2" width="11.86" height="30.7"/><rect x="1598.49" y="750.0" width="11.86" height="20.8"/><rect x="1611.85" y="738.0" width="11.86" height="32.8"/><rect x="1625.21" y="746.3" width="11.86" height="24.5"/><rect x="1638.57" y="744.0" width="11.86" height="26.8"/><rect x="1651.93" y="742.7" width="11.86" height="28.2"/><rect x="1665.29" y="748.7" width="11.86" height="22.2"/><rect x="1678.65" y="744.0" width="11.86" height="26.8"/><rect x="1692.01" y="744.0" width="11.86" height="26.8"/><rect x="1705.37" y="749.7" width="11.86" height="21.2"/><rect x="1718.73" y="747.3" width="11.86" height="23.5"/><rect x="1732.09" y="755.7" width="11.86" height="15.2"/><rect x="1745.44" y="749.8" width="11.86" height="21.0"/><rect x="1758.80" y="749.8" width="11.86" height="21.0"/><rect x="1772.16" y="756.2" width="11.86" height="14.7"/><rect x="1785.52" y="752.8" width="11.86" height="18.0"/><rect x="1798.88" y="750.2" width="11.86" height="20.7"/><rect x="1812.24" y="747.3" width="11.86" height="23.5"/><rect x="1825.60" y="755.8" width="11.86" height="15.0"/><rect x="1838.96" y="754.3" width="11.86" height="16.5"/><rect x="1852.32" y="749.8" width="11.86" height="21.0"/><rect x="1865.68" y="748.8" width="11.86" height="22.0"/><rect x="1879.04" y="749.2" width="11.86" height="21.7"/><rect x="1892.40" y="748.7" width="11.86" height="22.2"/><rect x="1905.76" y="752.2" width="11.86" height="18.7"/><rect x="1919.12" y="752.8" width="11.86" height="18.0"/><rect x="1932.48" y="749.2" width="11.86" height="21.7"/><rect x="1945.84" y="747.5" width="11.86" height="23.3"/><rect x="1959.20" y="747.3" width="11.86" height="23.5"/><rect x="1972.56" y="745.7" width="11.86" height="25.2"/><rect x="1985.92" y="748.0" width="11.86" height="22.8"/><rect x="1999.28" y="754.2" width="11.86" height="16.7"/><rect x="2012.64" y="766.0" width="11.86" height="4.8"/></g>
<g fill="#1c1f33" stroke="#1c1f33" stroke-width="0.2" font-size="14.4" text-anchor="end" letter-spacing="0.2">
<text x="852.7" y="775.2">0.00</text>
<text x="852.7" y="717.6">100.00</text>
<text x="852.7" y="658.7">200.00</text>
<text x="852.7" y="601.4">300.00</text>
<text x="852.7" y="542.7">400.00</text>
<text x="852.7" y="484.9">500.00</text>
<text x="852.7" y="426.2">600.00</text>
<text x="852.7" y="368.6">700.00</text>
<text x="852.7" y="309.9">800.00</text>
</g>
<g fill="#1c1f33" stroke="#1c1f33" stroke-width="0.2" font-size="14.4" text-anchor="middle">
<text x="863.0" y="791.8">Jan 2015</text>
<text x="943.2" y="791.8">Jul 2015</text>
<text x="1023.3" y="791.8">Jan 2016</text>
<text x="1103.5" y="791.8">Jul 2016</text>
<text x="1183.6" y="791.8">Jan 2017</text>
<text x="1263.8" y="791.8">Jul 2017</text>
<text x="1344.0" y="791.8">Jan 2018</text>
<text x="1424.1" y="791.8">Jul 2018</text>
<text x="1504.3" y="791.8">Jan 2019</text>
<text x="1584.4" y="791.8">Jul 2019</text>
<text x="1664.6" y="791.8">Jan 2020</text>
<text x="1744.7" y="791.8">Jul 2020</text>
<text x="1824.9" y="791.8">Jan 2021</text>
<text x="1905.1" y="791.8">Jul 2021</text>
<text x="1985.2" y="791.8">Jan 2022</text>
</g>
<text x="1422.4" y="828.4" font-size="15.2" font-weight="bold" fill="#1c1f33" stroke="#1c1f33" stroke-width="0.35" textLength="43.3" lengthAdjust="spacingAndGlyphs">Month</text>
<text transform="translate(784.2,561.7) rotate(-90)" font-size="15.6" font-weight="bold" fill="#1c1f33" stroke="#1c1f33" stroke-width="0.35" textLength="47.7" lengthAdjust="spacingAndGlyphs">Orders</text>
<text x="777.3" y="269.5" font-size="19.6" fill="#717a96" textLength="273.6" lengthAdjust="spacing">Observed Revenue by Category</text>
<text x="806.2" y="860.4" font-size="15.3" font-weight="bold" fill="#1c1f33" stroke="#1c1f33" stroke-width="0.3" textLength="77.4" lengthAdjust="spacingAndGlyphs">CATEGORY</text>
<rect x="806.2" y="878" width="13.8" height="13.8" fill="#5778a4"/>
<text x="826.2" y="890" font-size="14.3" fill="#1c1f33" stroke="#1c1f33" stroke-width="0.2" textLength="66.2" lengthAdjust="spacing">Dumplings</text>
<rect x="913" y="878" width="13.8" height="13.8" fill="#e58c3b"/>
<text x="932.5" y="890" font-size="14.3" fill="#1c1f33" stroke="#1c1f33" stroke-width="0.2" textLength="51.7" lengthAdjust="spacing">Noodles</text>
<rect x="1004" y="878" width="13.8" height="13.8" fill="#d65f5c"/>
<text x="1024.2" y="890" font-size="14.3" fill="#1c1f33" stroke="#1c1f33" stroke-width="0.2" textLength="70.2" lengthAdjust="spacing">Quick Bites</text>
<rect x="1115" y="878" width="13.8" height="13.8" fill="#84b4b1"/>
<text x="1134.2" y="890" font-size="14.3" fill="#1c1f33" stroke="#1c1f33" stroke-width="0.2" textLength="45.7" lengthAdjust="spacing">Sweets</text>
<rect x="1199.5" y="878" width="13.8" height="13.8" fill="#6a9f58"/>
<text x="1219.5" y="890" font-size="14.3" fill="#1c1f33" stroke="#1c1f33" stroke-width="0.2" textLength="48.5" lengthAdjust="spacing">Veggies</text>
</svg>

<!-- table -->

<div class="a th"></div>
<div class="a hl" style="top:1016.5px"></div>
<div class="a hl" style="top:1055.5px"></div>
<div class="a hl" style="top:1095px"></div>
<div class="a hl" style="top:1134px"></div>
<div class="a hl" style="top:1173px;background:#f2f3f7"></div>
<div class="a vc" style="left:555px"></div>
<div class="a vc" style="left:715px"></div>
<div class="a vc" style="left:863.8px"></div>
<div class="a vc" style="left:1051.8px"></div>
<div class="a vc" style="left:1183.4px"></div>
<div class="a" style="left:2032px;top:978px;width:1.3px;height:195px;background:#e6e8ef"></div>
<div class="a" style="left:2036.4px;top:980.8px;width:6.6px;height:16.6px;background:#c3c6d6;border-radius:3.3px"></div>
<svg class="ov" width="2400" height="1260" viewBox="0 0 2400 1260">
<rect x="354.6" y="951.1" width="16.0" height="13.5" rx="1.6" stroke="#68728f" stroke-width="1.3" fill="none"/><path d="M354.6 955.7 H370.6 M358.6 948.8 V953.2 M366.6 948.8 V953.2" stroke="#68728f" stroke-width="1.3" fill="none"/>
<path d="M574.6 965 L581.4 949.6 L588.2 965 M577.1 959.6 H585.7" stroke="#68728f" stroke-width="1.4" fill="none" stroke-linejoin="round"/>
<rect x="733.4" y="949.2" width="16.0" height="16.0" rx="1.8" stroke="#68728f" stroke-width="1.3" fill="none"/><path d="M737.4 957.5 L740.4 960.3 L745.7 953.8" stroke="#68728f" stroke-width="1.3" fill="none"/>
</svg>
<div class="t" style="left:378.4px;top:950.2px;font-size:16.6px;color:#5f6985;transform:scaleX(0.9251);transform-origin:0 0">ORDER_DAY</div>
<div class="t" style="left:597.2px;top:950.2px;font-size:16.6px;color:#5f6985;transform:scaleX(0.9040);transform-origin:0 0">CATEGORY</div>
<div class="t" style="left:756.8px;top:950.2px;font-size:16.6px;color:#5f6985;transform:scaleX(0.9529);transform-origin:0 0">IS_SPICY</div>
<div class="t" style="left:882.0px;top:952.1px;font-size:12.3px;color:#5f6985;transform:scaleX(0.8183);transform-origin:0 0">123</div>
<div class="t" style="left:905.6px;top:950.2px;font-size:16.6px;color:#5f6985;transform:scaleX(0.9116);transform-origin:0 0">ORDER_TOTAL</div>
<div class="t" style="left:1069.2px;top:952.1px;font-size:12.3px;color:#5f6985;transform:scaleX(0.8377);transform-origin:0 0">123</div>
<div class="t" style="left:1093.6px;top:950.2px;font-size:16.6px;color:#5f6985;transform:scaleX(0.9220);transform-origin:0 0">COUNT</div>
<div class="t" style="left:346.4px;top:990.8px;font-size:16.6px;color:#1c1f33;transform:scaleX(1.0875);transform-origin:0 0">2019-07-27T00:00:00</div>
<div class="t" style="left:564.8px;top:990.8px;font-size:16.6px;color:#1c1f33;letter-spacing:-0.004px">Sweets</div>
<div class="t" style="left:724.8px;top:990.8px;font-size:16.6px;color:#1c1f33;letter-spacing:-0.345px">False</div>
<div class="t" style="left:1010.2px;top:990.8px;font-size:16.6px;color:#1c1f33;transform:scaleX(1.0450);transform-origin:0 0">16.0</div>
<div class="t" style="left:1166.8px;top:990.8px;font-size:16.6px;color:#1c1f33;letter-spacing:0.016px">2</div>
<div class="t" style="left:346.4px;top:1030.0px;font-size:16.6px;color:#1c1f33;transform:scaleX(1.0875);transform-origin:0 0">2018-05-19T00:00:00</div>
<div class="t" style="left:564.8px;top:1030.0px;font-size:16.6px;color:#1c1f33;letter-spacing:0.128px">Quick Bites</div>
<div class="t" style="left:724.8px;top:1030.0px;font-size:16.6px;color:#1c1f33;letter-spacing:-0.105px">True</div>
<div class="t" style="left:1010.2px;top:1030.0px;font-size:16.6px;color:#1c1f33;transform:scaleX(1.0450);transform-origin:0 0">22.0</div>
<div class="t" style="left:1166.8px;top:1030.0px;font-size:16.6px;color:#1c1f33;letter-spacing:0.016px">3</div>
<div class="t" style="left:346.4px;top:1069.2px;font-size:16.6px;color:#1c1f33;transform:scaleX(1.0875);transform-origin:0 0">2016-12-20T00:00:00</div>
<div class="t" style="left:564.8px;top:1069.2px;font-size:16.6px;color:#1c1f33;letter-spacing:0.249px">Dumplings</div>
<div class="t" style="left:724.8px;top:1069.2px;font-size:16.6px;color:#1c1f33;letter-spacing:-0.345px">False</div>
<div class="t" style="left:1000.2px;top:1069.2px;font-size:16.6px;color:#1c1f33;transform:scaleX(1.0546);transform-origin:0 0">152.0</div>
<div class="t" style="left:1156.7px;top:1069.2px;font-size:16.6px;color:#1c1f33;transform:scaleX(1.1199);transform-origin:0 0">11</div>
<div class="t" style="left:346.4px;top:1108.4px;font-size:16.6px;color:#1c1f33;transform:scaleX(1.0875);transform-origin:0 0">2019-12-08T00:00:00</div>
<div class="t" style="left:564.8px;top:1108.4px;font-size:16.6px;color:#1c1f33;letter-spacing:0.128px">Quick Bites</div>
<div class="t" style="left:724.8px;top:1108.4px;font-size:16.6px;color:#1c1f33;letter-spacing:-0.345px">False</div>
<div class="t" style="left:1010.2px;top:1108.4px;font-size:16.6px;color:#1c1f33;transform:scaleX(1.0450);transform-origin:0 0">21.5</div>
<div class="t" style="left:1166.8px;top:1108.4px;font-size:16.6px;color:#1c1f33;letter-spacing:0.016px">3</div>
<div class="t" style="left:346.4px;top:1147.6px;font-size:16.6px;color:#1c1f33;transform:scaleX(1.0875);transform-origin:0 0">2017-01-04T00:00:00</div>
<div class="t" style="left:564.8px;top:1147.6px;font-size:16.6px;color:#1c1f33;letter-spacing:0.249px">Dumplings</div>
<div class="t" style="left:724.8px;top:1147.6px;font-size:16.6px;color:#1c1f33;letter-spacing:-0.345px">False</div>
<div class="t" style="left:1000.2px;top:1147.6px;font-size:16.6px;color:#1c1f33;transform:scaleX(1.0546);transform-origin:0 0">143.0</div>
<div class="t" style="left:1156.7px;top:1147.6px;font-size:16.6px;color:#1c1f33;transform:scaleX(1.0450);transform-origin:0 0">14</div>

<!-- popover -->
<div class="a pop"></div>
<div class="a psel" style="top:237.9px;background:#fff"></div>
<div class="a psel" style="top:291.4px;background:#f8f9fc"></div>
<svg class="ov" width="2400" height="1260" viewBox="0 0 2400 1260">
<rect x="465.6" y="250.4" width="15.8" height="15.8" rx="1.8" stroke="#6f7994" stroke-width="1.4" fill="none"/><path d="M469.6 258.6 L472.5 261.4 L477.8 254.9" stroke="#6f7994" stroke-width="1.4" fill="none"/>
<path d="M698.1 255.4 L703.7 261.2 L709.3 255.4" stroke="#6f7994" stroke-width="1.5" fill="none"/>
<path d="M698.1 308.8 L703.7 314.6 L709.3 308.8" stroke="#6f7994" stroke-width="1.5" fill="none"/>
</svg>
<div class="t" style="left:495.0px;top:249.0px;font-size:20px;color:#1c1f33;transform:scaleX(0.9273);transform-origin:0 0">IS_SPICY</div>
<div class="t" style="left:463.0px;top:302.6px;font-size:20px;color:#1c1f33;letter-spacing:0.237px">Is true</div>
<div class="t" style="left:460.0px;top:350.2px;font-size:16.8px;color:#8790ad;letter-spacing:0.191px">Add condition</div>
</body>
</html>
